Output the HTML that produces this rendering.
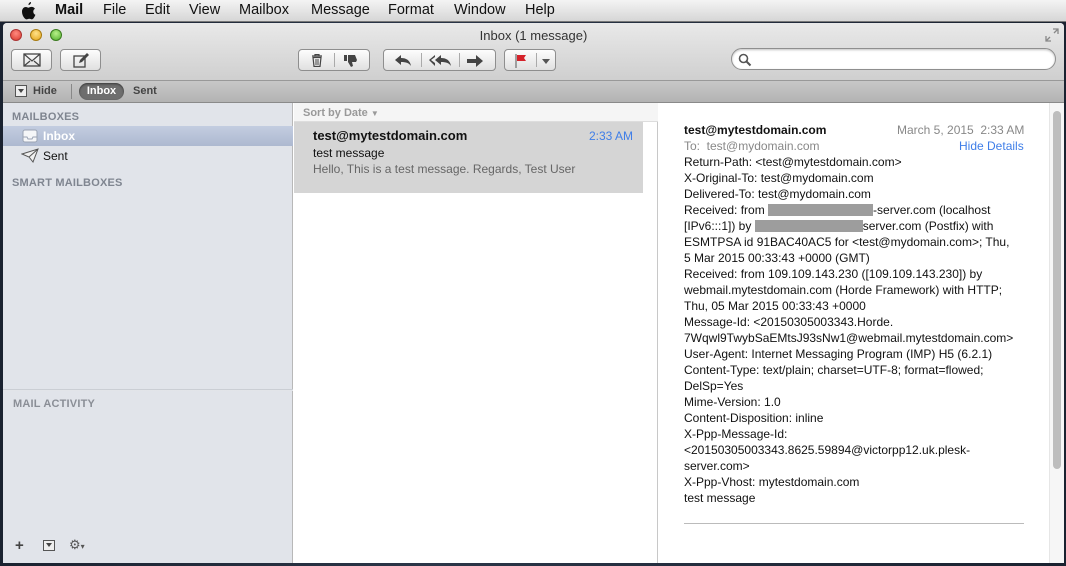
<!DOCTYPE html>
<html><head><meta charset="utf-8">
<style>
*{margin:0;padding:0;box-sizing:border-box}
body{width:1066px;height:566px;overflow:hidden;background:linear-gradient(90deg,#1a2230,#2b3648 40%,#1a2230);font-family:"Liberation Sans",Helvetica,Arial,sans-serif;position:relative}
.a{position:absolute}
#menu{left:0;top:0;width:1066px;height:22px;background:linear-gradient(#f4f4f4,#d6d6d6);border-bottom:1px solid #777;font-size:14.5px;color:#111}
#menu span{position:absolute;top:2px}
#win{left:3px;top:23px;width:1061px;height:540px;background:#fff;border-radius:4px 4px 0 0;overflow:hidden}
#tb{left:0;top:0;width:1061px;height:58px;background:linear-gradient(#e9e9e9,#cfcfcf);border-bottom:1px solid #999}
#fav{left:0;top:58px;width:1061px;height:22px;background:linear-gradient(#c8c8c8,#b3b3b3);border-bottom:1px solid #8a8a8a;font-size:11px;font-weight:bold;color:#444}
.btn{position:absolute;height:22px;border:1px solid #8e8e8e;border-radius:4px;background:linear-gradient(#fdfdfd,#e0e0e0)}
.sep{position:absolute;top:3px;width:1px;height:14px;background:#aaa}
#side{left:0;top:80px;width:290px;height:460px;background:#e1e4ea;border-right:1px solid #b8b8b8}
.hd{position:absolute;font-size:11px;font-weight:bold;color:#7f8590;letter-spacing:.2px}
#list{left:291px;top:80px;width:364px;height:460px;background:#fff;border-right:1px solid #c8c8c8}
#msg{left:656px;top:80px;width:405px;height:460px;background:#fff}
.ln{position:absolute;left:25px;font-size:12px;color:#111;white-space:nowrap}
.r{display:inline-block;background:#9d9d9d;height:12px;vertical-align:-2px}
</style></head><body>
<div id="menu" class="a">
<svg class="a" style="left:20px;top:2px" width="16" height="18" viewBox="0 0 16 18"><path d="M11 0c.2 1.4-1 3-2.5 3C8.3 1.6 9.6.2 11 0zM13.3 9.6c0 2.4 2.1 3.2 2.1 3.2s-1.6 4.6-3.5 4.6c-1 0-1.4-.6-2.6-.6s-1.7.6-2.6.6C4.8 17.4 2 13.6 2 9.6 2 6.6 4 5 5.8 5c1.1 0 2 .7 2.7.7.6 0 1.7-.8 3-.8.5 0 2.3.1 3.4 1.8-.1.1-1.6 1-1.6 2.9z" fill="#111"/></svg>
<span style="left:55px;font-weight:bold">Mail</span><span style="left:103px">File</span><span style="left:145px">Edit</span><span style="left:189px">View</span><span style="left:239px">Mailbox</span><span style="left:311px">Message</span><span style="left:388px">Format</span><span style="left:454px">Window</span><span style="left:525px">Help</span>
</div>
<div id="win" class="a">
<div id="tb" class="a">
 <div class="a" style="left:7px;top:6px;width:12px;height:12px;border-radius:50%;background:radial-gradient(circle at 50% 35%,#ff8a80,#d9382c);border:1px solid #a33"></div>
 <div class="a" style="left:27px;top:6px;width:12px;height:12px;border-radius:50%;background:radial-gradient(circle at 50% 35%,#ffe28a,#e3a316);border:1px solid #a77a10"></div>
 <div class="a" style="left:47px;top:6px;width:12px;height:12px;border-radius:50%;background:radial-gradient(circle at 50% 35%,#b8f08a,#4fae2a);border:1px solid #3a7a1e"></div>
 <div class="a" style="left:0;top:5px;width:1061px;text-align:center;font-size:13px;color:#333">Inbox (1 message)</div>
 <svg class="a" style="left:1042px;top:5px" width="14" height="14" viewBox="0 0 14 14"><path d="M8 1h5v5M13 1L9 5M6 13H1V8M1 13l4-4" stroke="#888" stroke-width="1.3" fill="none"/></svg>
 <div class="btn" style="left:8px;top:26px;width:41px"><svg class="a" style="left:11px;top:3px" width="18" height="14"><rect x="1" y="1" width="16" height="12" fill="none" stroke="#444" stroke-width="1.3"/><path d="M1 1l8 7 8-7M1 13l6-5M17 13l-6-5" stroke="#444" stroke-width="1.2" fill="none"/></svg></div>
 <div class="btn" style="left:57px;top:26px;width:41px"><svg class="a" style="left:12px;top:3px" width="17" height="15"><rect x="1" y="3" width="11" height="11" fill="none" stroke="#444" stroke-width="1.3"/><path d="M6 10l1-3 7-7 2 2-7 7z" fill="#444"/></svg></div>
 <div class="btn" style="left:295px;top:26px;width:72px"><svg class="a" style="left:12px;top:4px" width="12" height="13"><path d="M1 2h10M4 2V0.5h4V2M2 3.5h8l-1 9H3z" stroke="#444" stroke-width="1.2" fill="none"/><path d="M5 5v6M7 5v6" stroke="#444"/></svg><div class="sep" style="left:35px"></div><svg class="a" style="left:45px;top:4px" width="14" height="13"><path d="M0 1h3v6H0zM4 1h7l2 5-1 2H8l1 4-2 1-3-5z" fill="#444"/></svg></div>
 <div class="btn" style="left:380px;top:26px;width:113px"><svg class="a" style="left:10px;top:5px" width="18" height="12"><path d="M1 5l6-5v3c5 0 9 2 10 8-2-3-5-4-10-4v3z" fill="#444"/></svg><div class="sep" style="left:37px"></div><svg class="a" style="left:44px;top:5px" width="24" height="12"><path d="M1 5l6-5v2L3 5l4 3v3zM7 5l6-5v3c5 0 9 2 10 8-2-3-5-4-10-4v3z" fill="#444"/></svg><div class="sep" style="left:75px"></div><svg class="a" style="left:83px;top:5px" width="17" height="12"><path d="M0 4h9V0l7 6-7 6V8H0z" fill="#444"/></svg></div>
 <div class="btn" style="left:501px;top:26px;width:52px"><svg class="a" style="left:10px;top:4px" width="12" height="14"><path d="M1 0v14" stroke="#777" stroke-width="1.3"/><path d="M2 1h9l-2 3 2 3H2z" fill="#d5222a"/></svg><div class="sep" style="left:31px"></div><div class="a" style="left:37px;top:9px;border:4px solid transparent;border-top:5px solid #555"></div></div>
 <div class="a" style="left:728px;top:25px;width:325px;height:22px;border:1px solid #8e8e8e;border-radius:11px;background:#fff;box-shadow:inset 0 1px 2px rgba(0,0,0,.25)"><svg class="a" style="left:6px;top:4px" width="14" height="14"><circle cx="5.5" cy="5.5" r="4" stroke="#555" stroke-width="1.6" fill="none"/><path d="M8.5 8.5l4 4" stroke="#555" stroke-width="2"/></svg></div>
</div>
<div id="fav" class="a">
 <div class="a" style="left:12px;top:4px;width:12px;height:12px;border:1px solid #555;background:#eee"><div class="a" style="left:2px;top:3px;border:3px solid transparent;border-top:4px solid #444"></div></div>
 <div class="a" style="left:30px;top:4px">Hide</div>
 <div class="a" style="left:68px;top:3px;width:1px;height:15px;background:#888"></div>
 <div class="a" style="left:76px;top:2px;width:45px;height:17px;border-radius:9px;background:#6e6e6e;color:#fff;text-align:center;line-height:17px;box-shadow:inset 0 1px 2px rgba(0,0,0,.5)">Inbox</div>
 <div class="a" style="left:130px;top:4px">Sent</div>
</div>
<div id="side" class="a">
 <div class="hd" style="left:9px;top:8px">MAILBOXES</div>
 <div class="a" style="left:0;top:23px;width:290px;height:20px;background:linear-gradient(#c3cde0,#adb9d0)"></div>
 <svg class="a" style="left:19px;top:26px" width="16" height="14"><rect x="1" y="1" width="14" height="12" rx="2" fill="#f5f6f8" stroke="#9aa3b3"/><path d="M1 8h4l1 2h4l1-2h4" stroke="#9aa3b3" fill="none"/></svg>
 <div class="a" style="left:40px;top:26px;font-size:12px;font-weight:bold;color:#fff">Inbox</div>
 <svg class="a" style="left:18px;top:45px" width="18" height="15"><path d="M1 6L17 1 12 14 8 9zM8 9l9-8" stroke="#555" fill="#f0f0f0"/></svg>
 <div class="a" style="left:40px;top:46px;font-size:12px;color:#111">Sent</div>
 <div class="hd" style="left:9px;top:74px">SMART MAILBOXES</div>
 <div class="a" style="left:0;top:286px;width:290px;height:2px;background:linear-gradient(#bfc3ca,#eef0f3)"></div>
 <div class="hd" style="left:10px;top:295px;color:#8a8e96">MAIL ACTIVITY</div>
 <div class="a" style="left:12px;top:434px;font-size:15px;font-weight:bold;color:#444">+</div>
 <div class="a" style="left:40px;top:437px;width:12px;height:11px;border:1px solid #555;background:#eee"><div class="a" style="left:2px;top:2px;border:3px solid transparent;border-top:4px solid #444"></div></div>
 <div class="a" style="left:66px;top:434px;font-size:13px;color:#555">⚙<span style="font-size:8px">▾</span></div>
</div>
<div id="list" class="a">
 <div class="a" style="left:0;top:0;width:364px;height:19px;background:#f5f5f5;border-bottom:1px solid #ddd;font-size:11px;font-weight:bold;color:#999;padding:4px 0 0 9px">Sort by Date <span style="font-size:8px">▼</span></div>
 <div class="a" style="left:0;top:19px;width:349px;height:71px;background:#d5d5d5"></div>
 <div class="a" style="left:19px;top:25px;font-size:13px;font-weight:bold;color:#111">test@mytestdomain.com</div>
 <div class="a" style="left:295px;top:26px;font-size:12px;color:#3f7ee8">2:33 AM</div>
 <div class="a" style="left:19px;top:43px;font-size:12px;color:#111">test message</div>
 <div class="a" style="left:19px;top:59px;font-size:12px;color:#666">Hello, This is a test message. Regards, Test User</div>
</div>
<div id="msg" class="a">
 <div class="ln" style="top:20px;font-weight:bold">test@mytestdomain.com</div>
 <div class="a" style="left:238px;top:20px;font-size:12px;color:#888">March 5, 2015&nbsp;&nbsp;2:33 AM</div>
 <div class="ln" style="top:36px;color:#888">To:&nbsp; test@mydomain.com</div>
 <div class="a" style="left:300px;top:36px;font-size:12px;color:#3f7ee8">Hide Details</div>
 <div class="ln" style="top:52px">Return-Path: &lt;test@mytestdomain.com&gt;</div>
 <div class="ln" style="top:68px">X-Original-To: test@mydomain.com</div>
 <div class="ln" style="top:84px">Delivered-To: test@mydomain.com</div>
 <div class="ln" style="top:100px">Received: from <span class="r" style="width:105px"></span>-server.com (localhost</div>
 <div class="ln" style="top:116px">[IPv6:::1]) by <span class="r" style="width:108px"></span>server.com (Postfix) with</div>
 <div class="ln" style="top:132px">ESMTPSA id 91BAC40AC5 for &lt;test@mydomain.com&gt;; Thu,</div>
 <div class="ln" style="top:148px">5 Mar 2015 00:33:43 +0000 (GMT)</div>
 <div class="ln" style="top:164px">Received: from 109.109.143.230 ([109.109.143.230]) by</div>
 <div class="ln" style="top:180px">webmail.mytestdomain.com (Horde Framework) with HTTP;</div>
 <div class="ln" style="top:196px">Thu, 05 Mar 2015 00:33:43 +0000</div>
 <div class="ln" style="top:212px">Message-Id: &lt;20150305003343.Horde.</div>
 <div class="ln" style="top:228px">7Wqwl9TwybSaEMtsJ93sNw1@webmail.mytestdomain.com&gt;</div>
 <div class="ln" style="top:244px">User-Agent: Internet Messaging Program (IMP) H5 (6.2.1)</div>
 <div class="ln" style="top:260px">Content-Type: text/plain; charset=UTF-8; format=flowed;</div>
 <div class="ln" style="top:276px">DelSp=Yes</div>
 <div class="ln" style="top:292px">Mime-Version: 1.0</div>
 <div class="ln" style="top:308px">Content-Disposition: inline</div>
 <div class="ln" style="top:324px">X-Ppp-Message-Id:</div>
 <div class="ln" style="top:340px">&lt;20150305003343.8625.59894@victorpp12.uk.plesk-</div>
 <div class="ln" style="top:356px">server.com&gt;</div>
 <div class="ln" style="top:372px">X-Ppp-Vhost: mytestdomain.com</div>
 <div class="ln" style="top:388px">test message</div>
 <div class="a" style="left:25px;top:420px;width:340px;height:1px;background:#bbb"></div>
 <div class="a" style="left:390px;top:0;width:15px;height:460px;background:#f6f6f6;border-left:1px solid #e6e6e6"></div>
 <div class="a" style="left:394px;top:8px;width:8px;height:358px;border-radius:4px;background:#bdbdbd"></div>
</div>
</div>
</body></html>
